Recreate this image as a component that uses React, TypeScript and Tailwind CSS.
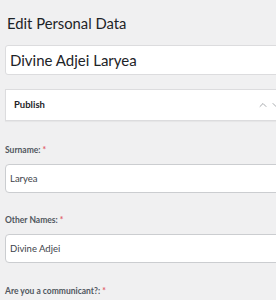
import { ChevronUp, ChevronDown } from "lucide-react";

/** Required-field label, WP admin style */
function FieldLabel({ text }: { text: string }) {
  return (
    <label className="block text-[8.5px] font-bold leading-[14px] text-[#50575e]">
      {text} <span className="text-[#e0606a]">*</span>
    </label>
  );
}

function TextInput({ value }: { value: string }) {
  return (
    <input
      readOnly
      value={value}
      className="mt-[7px] block h-[29px] w-full rounded-[4px] border border-[#cbcdd0] bg-white px-[4px] text-[9.5px] text-[#3c434a] outline-none"
    />
  );
}

export default function App() {
  return (
    <div className="h-[300px] w-[276px] overflow-hidden bg-[#f0f0f1] font-['Lato',sans-serif]">
      <div className="w-[300px] pl-[5px] pt-[12px]">
        <h1 className="pl-[2px] text-[14.8px] leading-[22px] text-[#1d2327]">
          Edit Personal Data
        </h1>

        <input
          readOnly
          value="Divine Adjei Laryea"
          className="mt-[11px] block h-[30px] w-full rounded-[3px] border border-[#dcdcde] bg-white px-[4px] text-[15px] text-[#1d2327] outline-none"
        />

        {/* Publish postbox */}
        <div className="mt-[14px] flex h-[32px] items-center justify-between border border-[#dcdcde] bg-white pl-[8px] shadow-[0_1px_1px_rgba(0,0,0,0.04)]">
          <span className="text-[9.5px] font-bold text-[#1d2327]">Publish</span>
          <div className="flex items-center gap-[1px] pr-[17px] text-[#a7aaad]">
            <ChevronUp size={12} strokeWidth={2} />
            <ChevronDown size={12} strokeWidth={2} />
          </div>
        </div>

        <div className="mt-[22px]">
          <FieldLabel text="Surname:" />
          <TextInput value="Laryea" />
        </div>

        <div className="mt-[20px]">
          <FieldLabel text="Other Names:" />
          <TextInput value="Divine Adjei" />
        </div>

        <div className="mt-[21px]">
          <FieldLabel text="Are you a communicant?:" />
        </div>
      </div>
    </div>
  );
}
